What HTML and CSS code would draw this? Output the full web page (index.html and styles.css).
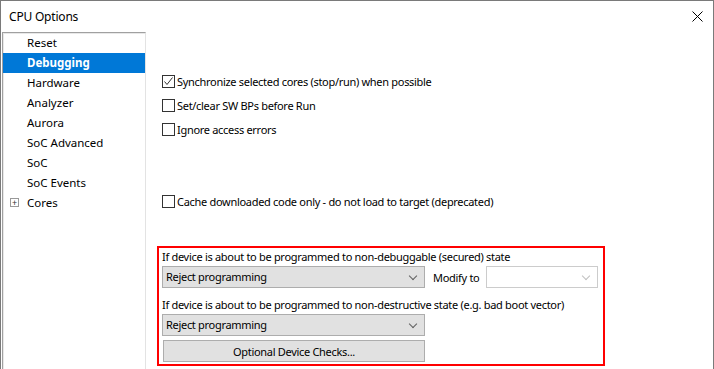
FILE: index.html
```html
<!DOCTYPE html>
<html lang="en">
<head>
  <meta charset="UTF-8">
  <meta name="viewport" content="width=device-width, initial-scale=1.0">
  <title>CPU Options</title>
  <link rel="stylesheet" href="styles.css">
</head>
<body>
  <div class="window">

    <!-- Title bar -->
    <div class="titlebar">
      <span class="title">CPU Options</span>
      <svg class="close" width="11" height="11" viewBox="0 0 11 11">
        <path d="M0.5 0.5 L10.5 10.5 M10.5 0.5 L0.5 10.5" stroke="#000" stroke-width="1" fill="none"/>
      </svg>
    </div>

    <div class="main">

      <!-- Category tree -->
      <ul class="tree">
        <li>Reset</li>
        <li class="selected">Debugging</li>
        <li>Hardware</li>
        <li>Analyzer</li>
        <li>Aurora</li>
        <li>SoC Advanced</li>
        <li>SoC</li>
        <li>SoC Events</li>
        <li><span class="expander">+</span>Cores</li>
      </ul>

      <!-- Options page -->
      <div class="page">
        <label class="check"><span class="box checked"><svg width="11" height="11" viewBox="0 0 11 11"><path d="M1.5 5.5 L4 8.5 L9.5 1.5" stroke="#333" stroke-width="1" fill="none"/></svg></span>Synchronize selected cores (stop/run) when possible</label>
        <label class="check"><span class="box"></span>Set/clear SW BPs before Run</label>
        <label class="check"><span class="box"></span>Ignore access errors</label>

        <div class="spacer"></div>

        <label class="check"><span class="box"></span>Cache downloaded code only - do not load to target (deprecated)</label>

        <div class="secure">
          <div class="caption">If device is about to be programmed to non-debuggable (secured) state</div>
          <div class="row">
            <div class="combo">Reject programming<span class="chevron"></span></div>
            <span class="modify">Modify to</span>
            <div class="combo small disabled"><span class="chevron"></span></div>
          </div>
          <div class="caption">If device is about to be programmed to non-destructive state (e.g. bad boot vector)</div>
          <div class="row">
            <div class="combo">Reject programming<span class="chevron"></span></div>
          </div>
          <button class="checks">Optional Device Checks...</button>
        </div>
      </div>

    </div>
  </div>
</body>
</html>
```

FILE: styles.css
```css
body {
  margin: 0;
  font-family: "Noto Sans", sans-serif;
  font-size: 11px;
  letter-spacing: -0.3px;
  color: #000;
  background: #fff;
}
.window {
  width: 712px;
  height: 368px;
  border: 1px solid #7a7a7a;
  border-bottom: none;
  display: flex;
  flex-direction: column;
  overflow: hidden;
}
.titlebar {
  height: 31px;
  flex-shrink: 0;
  display: flex;
  align-items: center;
  justify-content: space-between;
  padding: 0 10px 0 8px;
  box-sizing: border-box;
}
.title {
  font-size: 12px;
  letter-spacing: -0.2px;
}
.close {
  display: block;
}
.main {
  flex: 1;
  min-height: 0;
  display: flex;
}
.tree {
  list-style: none;
  margin: 0 0 0 1px;
  padding: 0;
  width: 142px;
  border-top: 1px solid #a0a0a0;
  border-left: 1px solid #a0a0a0;
  border-right: 1px solid #e3e3e3;
  box-shadow: inset 1px 1px 0 #e8e8e8;
  font-size: 11.5px;
  letter-spacing: 0;
}
.tree li {
  height: 20px;
  line-height: 20px;
  padding-left: 24px;
  position: relative;
}
.tree li.selected {
  background: #0078d7;
  color: #fff;
  font-weight: bold;
}
.expander {
  position: absolute;
  left: 7px;
  top: 5px;
  width: 7px;
  height: 7px;
  border: 1px solid #999;
  font-size: 9px;
  line-height: 7px;
  text-align: center;
  color: #333;
}
.page {
  flex: 1;
  padding: 37px 0 0 11px;
  display: flex;
  flex-direction: column;
  align-items: flex-start;
}
.check {
  height: 24px;
  flex-shrink: 0;
  display: flex;
  align-items: center;
  padding-left: 5px;
  white-space: nowrap;
}
.box {
  width: 11px;
  height: 11px;
  border: 1px solid #333;
  margin-right: 2px;
  display: flex;
}
.spacer {
  height: 48px;
  flex-shrink: 0;
}
.secure {
  margin-top: 33px;
  width: 440px;
  border: 2px solid #f00;
  padding: 0 1px 2px 3px;
  flex-shrink: 0;
}
.caption {
  height: 18px;
  line-height: 18px;
  white-space: nowrap;
}
.secure .caption + .row + .caption {
  margin-top: 8px;
}
.row {
  display: flex;
  align-items: center;
}
.combo {
  width: 258px;
  height: 20px;
  line-height: 20px;
  border: 1px solid #adadad;
  background: #e1e1e1;
  padding-left: 3px;
  position: relative;
  white-space: nowrap;
}
.combo.small {
  width: 107px;
}
.combo.disabled {
  background: #fff;
  border-color: #cccccc;
}
.chevron {
  position: absolute;
  right: 8px;
  top: 6px;
  width: 5px;
  height: 5px;
  border-right: 1px solid #606060;
  border-bottom: 1px solid #606060;
  transform: rotate(45deg);
}
.combo.disabled .chevron {
  border-color: #c0c0c0;
}
.modify {
  margin: 0 7px 0 8px;
  white-space: nowrap;
}
.checks {
  margin: 4px 0 0 1px;
  width: 262px;
  height: 22px;
  border: 1px solid #adadad;
  background: #e1e1e1;
  font-family: "Noto Sans", sans-serif;
  font-size: 11px;
  letter-spacing: -0.3px;
  color: #000;
  padding: 0;
}
```
